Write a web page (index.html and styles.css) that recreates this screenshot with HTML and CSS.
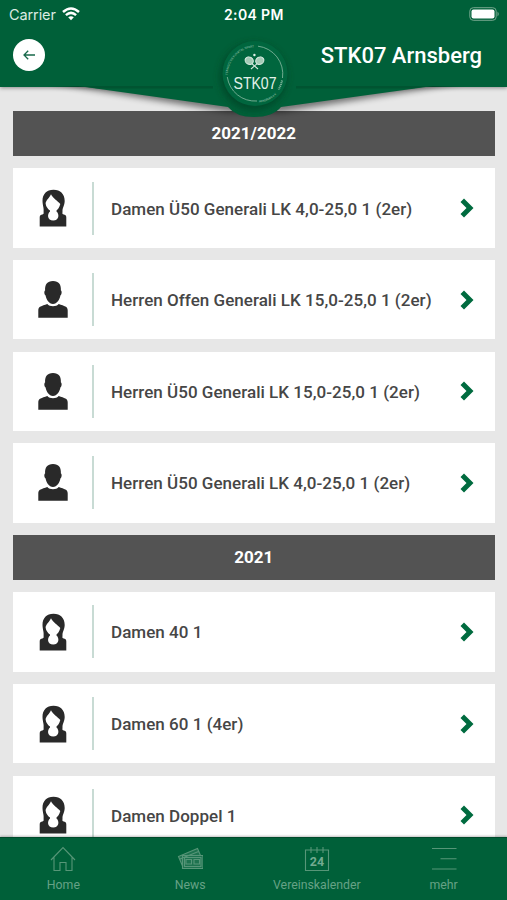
FILE: index.html
```
<!DOCTYPE html>
<html lang="de">
<head>
<meta charset="utf-8">
<title>STK07 Arnsberg</title>
<link rel="stylesheet" href="styles.css">
</head>
<body>
<svg class="defs" aria-hidden="true">
  <symbol id="woman" viewBox="0 0 28 38">
    <path fill-rule="evenodd" d="M14.500 .7C7.500 .7 3.500 5 3.500 12C3.700 17 5 19 4.600 22C4.500 24 5 24.600 4 25.300C1.500 25.800 .7 26.500 .7 28.500V37.500H27.300V28.500C27.300 26.500 26.500 25.800 24 25.300C23 24.600 23.600 24 23.500 22C23.300 19 25.500 17 25.700 12C25.700 5 21.500 .7 14.500 .7ZM12 5.200C14 9.500 18.500 11.500 21.300 15C20.500 18.500 18.700 20.500 17.500 21.500V22.500C20.500 25 20.300 31.500 14.200 31.500S8 25 11 22.500V21.500C9.200 20.300 7 18 6.600 14.500C6.800 11 10.500 9 12 5.200Z"/>
  </symbol>
  <symbol id="man" viewBox="0 0 30 37">
    <path d="M15 0C9.200 0 6.800 3.500 7.100 9.500C5.800 10 6.300 13.700 7.600 14.500C8.300 18.500 11 23 15 23S21.700 18.500 22.400 14.500C23.700 13.700 24.200 10 22.900 9.500C23.200 3.500 20.800 0 15 0Z"/>
    <path d="M9.300 23C3.500 25.300 .3 25 .3 29.500V36.800H29.700V29.500C29.700 25 26.500 25.300 20.700 23C18.500 26 11.500 26 9.300 23Z"/>
  </symbol>
  <symbol id="chevron" viewBox="0 0 14 20">
    <path d="M.5 4L4 .5L13.500 10L4 19.500L.5 16L6.500 10Z"/>
  </symbol>
</svg>

<div class="app">
  <header class="header">
    <div class="status">
      <span class="carrier">Carrier</span>
      <svg class="wifi" viewBox="0 0 18 14"><g fill="none" stroke="#fff" stroke-width="2.500"><path d="M1 5Q9-2 17 5M3.900 8.100Q9 3.700 14.100 8.100"/></g><path fill="#fff" d="M6.200 10.300Q9 8 11.800 10.300L9 13.300Z"/></svg>
      <span class="time">2:04 PM</span>
      <svg class="battery" viewBox="0 0 31 14"><rect x=".8" y=".7" width="26.400" height="12.600" rx="3.500" fill="none" stroke="#76a78f"/><rect x="2.500" y="2.500" width="23" height="9" rx="2" fill="#fff"/><path fill="#76a78f" d="M28.500 4.500Q31 7 28.500 9.500Z"/></svg>
    </div>
    <div class="titlebar">
      <button class="back" aria-label="Zurück"><svg viewBox="0 0 12 10"><path d="M12 5H1M5.200 .7L1 5L5.200 9.300" fill="none" stroke="#17684a" stroke-width="1.300"/></svg></button>
      <h1>STK07 Arnsberg</h1>
    </div>
    <svg class="crest" viewBox="0 0 507 130">
      <defs>
        <filter id="soft" x="-20%" y="-50%" width="140%" height="220%"><feGaussianBlur stdDeviation="3"/></filter>
        <path id="arcTop" d="M227.800 75A28 28 0 0 1 256 47.200"/>
        <path id="arcLow" d="M259 102.500A28 28 0 0 0 278 92.500"/>
        <clipPath id="below"><rect y="86" width="507" height="44"/></clipPath>
      </defs>
      <g clip-path="url(#below)">
        <path d="M50 83L228 112L282 112L462 83Z" fill="#000" opacity=".5" filter="url(#soft)"/>
        <path d="M78 86L228 107Q236 117 254 117Q273 117 281 107L433 86Z" fill="#006039"/>
        <path d="M80 86H213V88.500H98ZM296 88.500V86H430L412 88.500Z" fill="#00502e" opacity=".7"/>
      </g>
      <circle cx="253.500" cy="76.500" r="34" fill="#003c22" opacity=".6" filter="url(#soft)"/>
      <circle cx="255" cy="73.500" r="32.500" fill="#00663e"/>
      <g fill="none" stroke="#8dbda5" stroke-width=".8">
        <path d="M258 46.200A28 28 0 0 1 282.500 78M227.300 77A28 28 0 0 0 257 101"/>
        <path d="M282 80.500A28 28 0 0 1 278.500 89.500" stroke-width="2" stroke-dasharray="1 .8"/>
      </g>
      <g class="ringtext"><text><textPath href="#arcTop" textLength="42">TENNISCLUB RUHRTAL SPORT</textPath></text><text><textPath href="#arcLow" textLength="20">ARNSBERG e.V.</textPath></text></g>
      <g stroke="#d5e9df" stroke-width="1.100" fill="#a4cbb7">
        <path d="M250 62L258 69M259 62L251 69"/>
        <ellipse cx="249.200" cy="60.700" rx="4.200" ry="3.600" transform="rotate(30 249.200 60.700)"/>
        <ellipse cx="259.800" cy="60.700" rx="4.200" ry="3.600" transform="rotate(-30 259.800 60.700)"/>
      </g>
      <circle cx="254.400" cy="55" r="1.200" fill="#e0f0e8"/>
      <text class="logotext" x="233.500" y="89" textLength="43" lengthAdjust="spacingAndGlyphs">STK07</text>
    </svg>
  </header>

  <main class="list">
    <h2 class="season">2021/2022</h2>
    <div class="card"><span class="avatar"><svg class="woman"><use href="#woman"/></svg></span><span class="name">Damen Ü50 Generali LK 4,0-25,0 1 (2er)</span><svg class="chev"><use href="#chevron"/></svg></div>
    <div class="card"><span class="avatar"><svg class="man"><use href="#man"/></svg></span><span class="name">Herren Offen Generali LK 15,0-25,0 1 (2er)</span><svg class="chev"><use href="#chevron"/></svg></div>
    <div class="card"><span class="avatar"><svg class="man"><use href="#man"/></svg></span><span class="name">Herren Ü50 Generali LK 15,0-25,0 1 (2er)</span><svg class="chev"><use href="#chevron"/></svg></div>
    <div class="card"><span class="avatar"><svg class="man"><use href="#man"/></svg></span><span class="name">Herren Ü50 Generali LK 4,0-25,0 1 (2er)</span><svg class="chev"><use href="#chevron"/></svg></div>
    <h2 class="season">2021</h2>
    <div class="card"><span class="avatar"><svg class="woman"><use href="#woman"/></svg></span><span class="name">Damen 40 1</span><svg class="chev"><use href="#chevron"/></svg></div>
    <div class="card"><span class="avatar"><svg class="woman"><use href="#woman"/></svg></span><span class="name">Damen 60 1 (4er)</span><svg class="chev"><use href="#chevron"/></svg></div>
    <div class="card"><span class="avatar"><svg class="woman"><use href="#woman"/></svg></span><span class="name">Damen Doppel 1</span><svg class="chev"><use href="#chevron"/></svg></div>
  </main>

  <nav class="tabs">
    <a class="tab"><svg viewBox="0 0 26 26"><path d="M1 14L13 1.500L25 14M4 11.500V24.500H10V16.500H16V24.500H22V11.500"/></svg><span>Home</span></a>
    <a class="tab"><svg viewBox="0 0 26 26"><path d="M5.500 9.500H26V22.500H5.500ZM5.500 20L1.500 10.500L20.500 2.500L23.500 9.500M3 13L21.500 5.500M7.500 11.500H24V20.500H7.500ZM9 13.500H14.500V18H9ZM17 13.500H22.500V18H17Z"/><path class="tint" d="M5.500 9.500H26V22.500H5.500ZM1.500 10.500L20.500 2.500L23.500 9.500H5.500V20Z"/></svg><span>News</span></a>
    <a class="tab"><svg viewBox="0 0 26 26"><path d="M1.500 4H24.500V24.500H1.500ZM7 1V7M13 1V7M19 1V7"/><text x="13" y="20" text-anchor="middle">24</text></svg><span>Vereinskalender</span></a>
    <a class="tab"><svg viewBox="0 0 26 26"><path d="M1 2.500H25.500M9.500 12.800H25.500M1 23H25.500"/></svg><span>mehr</span></a>
  </nav>
</div>
</body>
</html>
```
FILE: styles.css
```
* { box-sizing: border-box; }
body { margin: 0; font-family: Roboto, "Liberation Sans", sans-serif; }
.defs { position: absolute; width: 0; height: 0; }
.app {
  height: 900px;
  display: flex;
  flex-direction: column;
  overflow: hidden;
  background: #e7e7e7;
}

.header {
  position: relative;
  z-index: 1;
  flex: none;
  height: 86.500px;
  background: #006039;
  color: #fff;
  box-shadow: 0 1px 4px rgba(0, 0, 0, .4);
}
.crest { position: absolute; left: 0; top: 0; width: 507px; height: 130px; pointer-events: none; }
.logotext { font: 300 17px "Liberation Sans", sans-serif; fill: #e3f2ea; }
.ringtext { font-size: 3px; fill: #94c2ab; }
.status {
  height: 28px;
  padding: 0 8px 0 9px;
  display: grid;
  grid-template-columns: 53px 18px 1fr 31px;
  align-items: center;
  font: 400 14.500px Inter, sans-serif;
}
.carrier { letter-spacing: -.1px; color: #dcebe3; }
.wifi { width: 18px; height: 14px; }
.time { padding-left: 144px; font-size: 14px; font-weight: 600; letter-spacing: .35px; }
.battery { width: 31px; height: 14px; margin-left: 1px; }
.titlebar {
  height: 54px;
  padding: 0 25px 0 13px;
  display: flex;
  align-items: center;
  justify-content: space-between;
}
.back {
  width: 32px;
  height: 32px;
  padding: 0;
  border: 0;
  border-radius: 50%;
  background: #fff;
  display: grid;
  place-items: center;
}
.back svg { width: 12px; height: 10px; }
h1 { margin: 2px 0 0; font-size: 22px; font-weight: 500; line-height: 28px; }

.list {
  flex: 1;
  min-height: 0;
  overflow: hidden;
  padding: 24.500px 12.500px 0 13px;
  display: flex;
  flex-direction: column;
  gap: 12.300px;
}
.season {
  flex: none;
  height: 45.200px;
  margin: 0;
  background: #535353;
  color: #fff;
  font-size: 17px;
  font-weight: 700;
  line-height: 45px;
  text-align: center;
}
.card {
  flex: none;
  height: 79.300px;
  padding-right: 21px;
  display: flex;
  align-items: center;
  background: #fff;
}
.avatar {
  width: 81px;
  height: 53px;
  border-right: 2px solid #c8dbd4;
  display: grid;
  place-items: center;
  fill: #292929;
}
.woman { width: 28px; height: 38px; }
.man { width: 30px; height: 37px; }
.name {
  flex: 1;
  padding: 1px 0 0 17px;
  color: #464646;
  font-size: 17px;
  font-weight: 500;
  letter-spacing: .03px;
  white-space: nowrap;
}
.chev { width: 14px; height: 20px; fill: #006b3f; }

.tabs {
  position: relative;
  z-index: 1;
  flex: none;
  height: 63.500px;
  display: grid;
  grid-template-columns: repeat(4, 1fr);
  background: #006039;
  border-top: 1px solid #004b2c;
  box-shadow: 0 -1px 2px rgba(0, 0, 0, .25);
}
.tab {
  padding-top: 8.500px;
  display: flex;
  flex-direction: column;
  align-items: center;
  gap: 4.500px;
  color: #66a286;
  font-size: 12.300px;
  line-height: 17px;
}
.tab svg { width: 26px; height: 26px; fill: none; stroke: #579678; stroke-width: 1.100; }
.tab text { font-size: 12.500px; font-weight: 700; fill: #72aa90; stroke: none; }
.tab .tint { fill: #579678; fill-opacity: .35; stroke: none; }
```
